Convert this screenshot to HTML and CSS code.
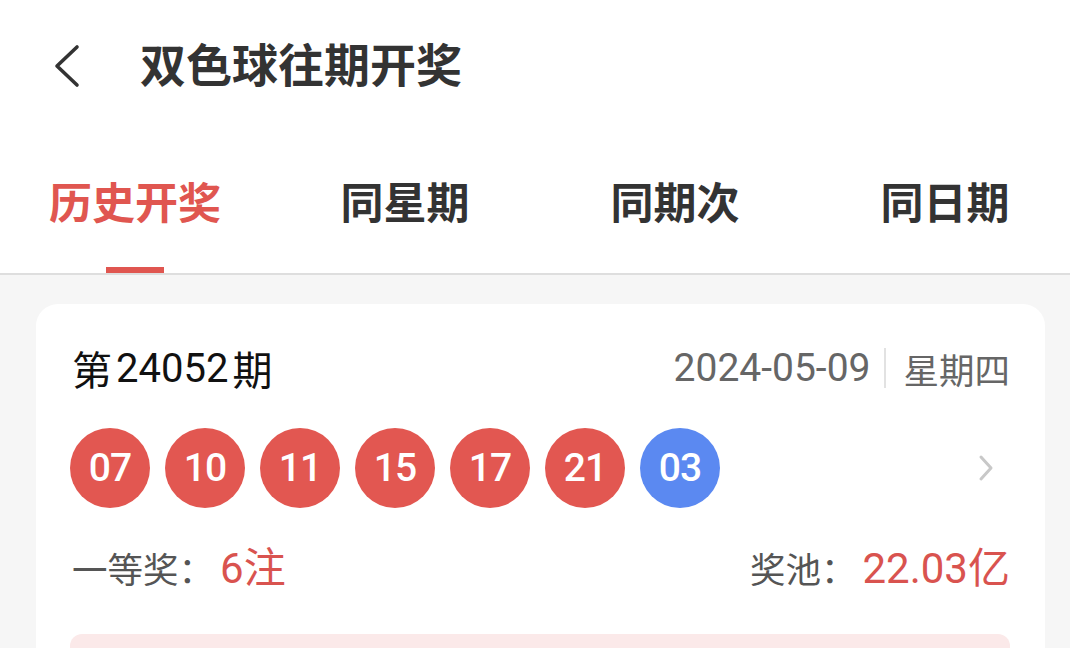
FILE: index.html
```html
<!DOCTYPE html>
<html lang="zh-CN">
<head>
<meta charset="utf-8">
<title>双色球往期开奖</title>
<link rel="stylesheet" href="styles.css">
</head>
<body>
<div class="page">
  <header class="topbar">
    <svg class="back" width="30" height="44" viewBox="0 0 30 44"><polyline points="24,3 4,22 24,41" fill="none" stroke="#333" stroke-width="3.6" stroke-linecap="round" stroke-linejoin="round"/></svg>
    <h1 class="title">双色球往期开奖</h1>
  </header>
  <nav class="tabs">
    <div class="tab active"><span>历史开奖</span><i class="indicator"></i></div>
    <div class="tab"><span>同星期</span></div>
    <div class="tab"><span>同期次</span></div>
    <div class="tab"><span>同日期</span></div>
  </nav>
  <main class="content">
    <section class="card">
      <div class="row-head">
        <div class="issue"><span class="cjk">第</span><span class="num">24052</span><span class="cjk">期</span></div>
        <div class="date"><span class="num">2024-05-09</span><i class="sep"></i><span class="cjk">星期四</span></div>
      </div>
      <div class="row-balls">
        <div class="balls">
          <span class="ball red">07</span>
          <span class="ball red">10</span>
          <span class="ball red">11</span>
          <span class="ball red">15</span>
          <span class="ball red">17</span>
          <span class="ball red">21</span>
          <span class="ball blue">03</span>
        </div>
        <svg class="more" width="20" height="30" viewBox="0 0 20 30"><polyline points="5,4 15,15 5,26" fill="none" stroke="#c8c8c8" stroke-width="3" stroke-linecap="round" stroke-linejoin="round"/></svg>
      </div>
      <div class="row-prize">
        <div class="prize"><span class="label">一等奖：</span><span class="value"><span class="num">6</span>注</span></div>
        <div class="prize"><span class="label">奖池：</span><span class="value"><span class="num">22.03</span>亿</span></div>
      </div>
      <div class="pink"></div>
    </section>
  </main>
</div>
</body>
</html>
```
FILE: styles.css
```css
* { box-sizing: border-box; margin: 0; padding: 0; }
html, body { width: 1070px; height: 648px; overflow: hidden; }
body {
  background: #f6f6f6;
  font-family: "Noto Sans CJK SC", "Noto Sans", sans-serif;
  color: #333;
}
.page { width: 1070px; }
.topbar {
  height: 136px;
  background: #fff;
  display: flex;
  align-items: center;
  padding-left: 53px;
  padding-bottom: 8px;
}
.back { display: block; margin-top: 4px; }
.title {
  margin-left: 57px;
  font-size: 46px;
  font-weight: 700;
  color: #333;
  line-height: 1;
  margin-top: -4px;
}
.tabs {
  height: 139px;
  background: #fff;
  border-bottom: 2px solid #dedede;
  display: grid;
  grid-template-columns: repeat(4, 270px);
  overflow: hidden;
}
.tab {
  position: relative;
  display: flex;
  justify-content: center;
  padding-top: 36px;
  font-size: 43px;
  font-weight: 700;
  color: #333;
  line-height: 56px;
}
.tab.active { color: #e05650; }
.indicator {
  position: absolute;
  bottom: 0;
  left: 106px;
  width: 58px;
  height: 6px;
  background: #e05650;
}
.content { padding: 29px 25px 0 36px; }
.card {
  background: #fff;
  border-radius: 22px;
  padding: 36px 35px 0 36px;
  height: 420px;
}
.num { font-family: Roboto, "Noto Sans", sans-serif; }
.row-head {
  height: 56px;
  display: flex;
  justify-content: space-between;
  align-items: center;
}
.issue { font-size: 40px; color: #111; display: flex; align-items: center; gap: 2px; }
.issue .num { font-size: 40px; margin: 0 2px; }
.date { display: flex; align-items: center; color: #666; font-size: 35.5px; }
.date .num { font-size: 39px; }
.sep { width: 2px; height: 40px; background: #e2e2e2; margin: 0 17px 0 14px; }
.row-balls {
  margin-top: 32px;
  height: 80px;
  display: flex;
  justify-content: space-between;
  align-items: center;
}
.balls { display: flex; gap: 15px; margin-left: -2px; }
.ball {
  width: 80px;
  height: 80px;
  border-radius: 50%;
  display: flex;
  align-items: center;
  justify-content: center;
  color: #fff;
  font-family: Roboto, sans-serif;
  font-weight: 500;
  font-size: 39px;
  letter-spacing: -1px;
}
.ball.red { background: #e25751; }
.ball.blue { background: #5b89f1; }
.more { display: block; margin-right: 14px; }
.row-prize {
  margin-top: 34px;
  height: 50px;
  display: flex;
  justify-content: space-between;
  align-items: center;
  font-size: 35.5px;
}
.prize { display: flex; align-items: center; }
.label { color: #555; }
.value { color: #d9534f; font-size: 42px; margin-left: 6px; line-height: 50px; }
.pink {
  margin-top: 42px;
  height: 60px;
  background: #fbe9e9;
  border-radius: 12px;
  margin-left: -2px;
}
```
